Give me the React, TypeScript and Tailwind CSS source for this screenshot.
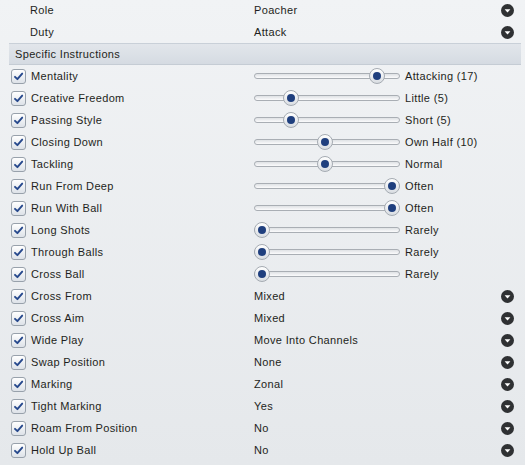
import React from "react";

type Slide = { label: string; pos: number; value: string };
type Pick = { label: string; value: string };

const sliders: Slide[] = [
  { label: "Mentality", pos: 115, value: "Attacking (17)" },
  { label: "Creative Freedom", pos: 29, value: "Little (5)" },
  { label: "Passing Style", pos: 29, value: "Short (5)" },
  { label: "Closing Down", pos: 63, value: "Own Half (10)" },
  { label: "Tackling", pos: 63, value: "Normal" },
  { label: "Run From Deep", pos: 130, value: "Often" },
  { label: "Run With Ball", pos: 130, value: "Often" },
  { label: "Long Shots", pos: 0, value: "Rarely" },
  { label: "Through Balls", pos: 0, value: "Rarely" },
  { label: "Cross Ball", pos: 0, value: "Rarely" },
];

const picks: Pick[] = [
  { label: "Cross From", value: "Mixed" },
  { label: "Cross Aim", value: "Mixed" },
  { label: "Wide Play", value: "Move Into Channels" },
  { label: "Swap Position", value: "None" },
  { label: "Marking", value: "Zonal" },
  { label: "Tight Marking", value: "Yes" },
  { label: "Roam From Position", value: "No" },
  { label: "Hold Up Ball", value: "No" },
];

function DropIcon() {
  return (
    <svg width="13" height="13" viewBox="0 0 13 13" className="shrink-0">
      <circle cx="6.5" cy="6.5" r="6.5" fill="#2f3133" />
      <path d="M3.6 5.2 H9.4 L6.5 8.6 Z" fill="#ffffff" />
    </svg>
  );
}

function Check() {
  return (
    <div className="w-[15px] h-[15px] rounded-[3px] border border-[#98a1ab] bg-gradient-to-b from-white to-[#dde2e8] flex items-center justify-center shrink-0">
      <svg width="11" height="11" viewBox="0 0 11 11">
        <path d="M2 5.8 L4.4 8.2 L9.2 2.6" fill="none" stroke="#26488c" strokeWidth="1.9" strokeLinecap="round" strokeLinejoin="round" />
      </svg>
    </div>
  );
}

function Slider({ pos }: { pos: number }) {
  return (
    <div className="relative w-[146px] h-[22px] shrink-0">
      <div className="absolute left-0 right-0 top-[8px] h-[6px] rounded-full border border-[#a9aeb4] bg-gradient-to-b from-[#dfe2e5] to-[#fbfbfc]" />
      {/* knob */}
      <div
        className="absolute top-[3px] w-[16px] h-[16px] rounded-full border border-[#a5abb2] bg-gradient-to-b from-white to-[#d9dde2] flex items-center justify-center"
        style={{ left: pos }}
      >
        <div className="w-[8px] h-[8px] rounded-full bg-[#1f3f7e]" />
      </div>
    </div>
  );
}

function Row({ children }: { children: React.ReactNode }) {
  return <div className="h-[22px] flex items-center">{children}</div>;
}

export default function App() {
  return (
    <div
      className="w-[525px] h-[465px] overflow-hidden bg-gradient-to-b from-[#f1f3f5] to-[#e5e8eb] text-[11px] tracking-[0.35px] text-[#1e1f21]"
      style={{ fontFamily: '"Liberation Sans", Arial, sans-serif' }}
    >
      <div className="-mt-[1px]">
        {/* Role / Duty */}
        {[
          { label: "Role", value: "Poacher" },
          { label: "Duty", value: "Attack" },
        ].map((r) => (
          <Row key={r.label}>
            <span className="pl-[30px] w-[254px] shrink-0">{r.label}</span>
            <span className="flex-1">{r.value}</span>
            <div className="pr-[11px]">
              <DropIcon />
            </div>
          </Row>
        ))}

        <div className="ml-[9px] mr-[4px] h-[22px] flex items-center pl-[6px] bg-gradient-to-b from-[#e2e6eb] to-[#d5dbe2] border-t border-[#c9d0d8] border-b border-b-[#c5ccd4]">
          Specific Instructions
        </div>

        {sliders.map((s) => (
          <Row key={s.label}>
            <div className="pl-[11px] w-[254px] shrink-0 flex items-center gap-[5px]">
              <Check />
              <span>{s.label}</span>
            </div>
            <Slider pos={s.pos} />
            <span className="pl-[5px]">{s.value}</span>
          </Row>
        ))}

        {picks.map((p) => (
          <Row key={p.label}>
            <div className="pl-[11px] w-[254px] shrink-0 flex items-center gap-[5px]">
              <Check />
              <span>{p.label}</span>
            </div>
            <span className="flex-1">{p.value}</span>
            <div className="pr-[11px]">
              <DropIcon />
            </div>
          </Row>
        ))}
      </div>
    </div>
  );
}
